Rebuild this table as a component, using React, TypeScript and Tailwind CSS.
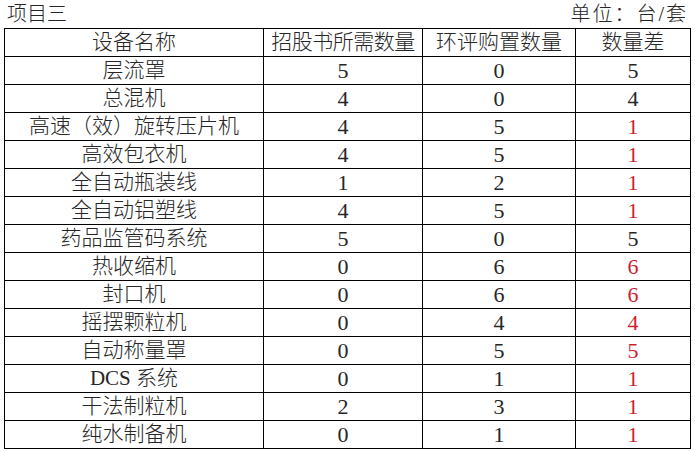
const rows: { name: string; a: number; b: number; diff: number; red: boolean }[] = [
    { name: "层流罩", a: 5, b: 0, diff: 5, red: false },
    { name: "总混机", a: 4, b: 0, diff: 4, red: false },
    { name: "高速（效）旋转压片机", a: 4, b: 5, diff: 1, red: true },
    { name: "高效包衣机", a: 4, b: 5, diff: 1, red: true },
    { name: "全自动瓶装线", a: 1, b: 2, diff: 1, red: true },
    { name: "全自动铝塑线", a: 4, b: 5, diff: 1, red: true },
    { name: "药品监管码系统", a: 5, b: 0, diff: 5, red: false },
    { name: "热收缩机", a: 0, b: 6, diff: 6, red: true },
    { name: "封口机", a: 0, b: 6, diff: 6, red: true },
    { name: "摇摆颗粒机", a: 0, b: 4, diff: 4, red: true },
    { name: "自动称量罩", a: 0, b: 5, diff: 5, red: true },
    { name: "DCS 系统", a: 0, b: 1, diff: 1, red: true },
    { name: "干法制粒机", a: 2, b: 3, diff: 1, red: true },
    { name: "纯水制备机", a: 0, b: 1, diff: 1, red: true },
];

const cell = "border border-black p-0 h-[28px] text-center align-middle whitespace-nowrap";

const App = () => {
    return (
        <div
            className="w-[695px] h-[452px] bg-white text-[#262626] font-light overflow-hidden"
            style={{ fontFamily: '"Liberation Serif", "Noto Sans CJK SC", serif' }}
        >
            <div className="flex justify-between items-center h-[28px] pl-[7px] pr-[7px] leading-none">
                <span className="text-[20px]">项目三</span>
                <span className="text-[20px] tracking-[2px]">单位：台/套</span>
            </div>
            <table className="ml-[4px] border-collapse table-fixed w-[686px] text-[21px] leading-none">
                <colgroup>
                    <col className="w-[259px]" />
                    <col className="w-[159px]" />
                    <col className="w-[153px]" />
                    <col className="w-[115px]" />
                </colgroup>
                <thead>
                    <tr>
                        <th className={`${cell} font-light`}>设备名称</th>
                        <th className={`${cell} font-light tracking-[-0.5px]`}>招股书所需数量</th>
                        <th className={`${cell} font-light`}>环评购置数量</th>
                        <th className={`${cell} font-light`}>数量差</th>
                    </tr>
                </thead>
                <tbody>
                    {rows.map((r) => (
                        <tr key={r.name}>
                            <td className={cell}>{r.name}</td>
                            <td className={`${cell} text-[22px]`}>{r.a}</td>
                            <td className={`${cell} text-[22px]`}>{r.b}</td>
                            <td className={`${cell} text-[22px] ${r.red ? "text-[#cc1f30]" : ""}`}>{r.diff}</td>
                        </tr>
                    ))}
                </tbody>
            </table>
        </div>
    );
};

export default App;
